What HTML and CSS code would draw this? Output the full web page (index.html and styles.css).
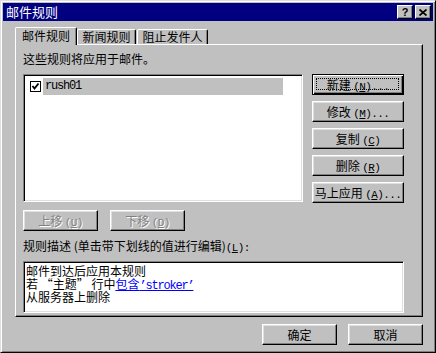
FILE: index.html
```html
<!DOCTYPE html>
<html lang="zh-CN">

<head>
    <meta charset="utf-8">
    <meta name="viewport" content="width=device-width, initial-scale=1.0">
    <link rel="stylesheet" href="styles.css">
</head>

<body>
    <div class="window">
        <!-- Title bar -->
        <div class="titlebar">
            <span class="title">邮件规则</span>
            <div class="tb-buttons">
                <span class="tb-btn help">?</span>
                <span class="tb-btn">
                    <svg width="8" height="7" viewBox="0 0 8 7">
                        <path d="M0.5 0.5 L7.5 6.5 M7.5 0.5 L0.5 6.5" stroke="#000" stroke-width="1.7" fill="none" />
                    </svg>
                </span>
            </div>
        </div>

        <div class="content">
            <!-- Tabs -->
            <div class="tabs">
                <div class="tab active">邮件规则</div>
                <div class="tab tab-news">新闻规则</div>
                <div class="tab tab-block">阻止发件人</div>
            </div>

            <div class="panel">
                <div class="label">这些规则将应用于邮件。</div>

                <div class="rules-row">
                    <div class="listbox">
                        <div class="item">
                            <svg class="check" width="11" height="11" viewBox="0 0 11 11">
                                <rect x="0.5" y="0.5" width="10" height="10" fill="#fff" stroke="#000" />
                                <polyline points="2.5,5 4.5,7.5 8.5,2.5" fill="none" stroke="#000" stroke-width="1.9" />
                            </svg>
                            <span class="item-name">rush01</span>
                        </div>
                    </div>

                    <div class="side-buttons">
                        <button class="btn default"><span class="focus"></span>新建 <span class="acc">(<u>N</u>)...</span></button>
                        <button class="btn">修改 <span class="acc">(<u>M</u>)...</span></button>
                        <button class="btn">复制 <span class="acc">(<u>C</u>)</span></button>
                        <button class="btn">删除 <span class="acc">(<u>R</u>)</span></button>
                        <button class="btn">马上应用 <span class="acc">(<u>A</u>)...</span></button>
                    </div>
                </div>

                <div class="move-row">
                    <button class="btn small" disabled>上移 <span class="acc">(<u>U</u>)</span></button>
                    <button class="btn small" disabled>下移 <span class="acc">(<u>D</u>)</span></button>
                </div>

                <div class="label label-desc">规则描述 (单击带下划线的值进行编辑)<span class="acc">(<u>L</u>):</span></div>

                <div class="desc">
                    <div class="desc-line">邮件到达后应用本规则</div>
                    <div class="desc-line">若 “主题” 行中<a class="link" href="#">包含<span class="mono">’stroker’</span></a></div>
                    <div class="desc-line">从服务器上删除</div>
                </div>
            </div>

            <div class="footer">
                <button class="btn small">确定</button>
                <button class="btn small">取消</button>
            </div>
        </div>
    </div>
</body>

</html>
```

FILE: styles.css
```css
* {
    box-sizing: border-box;
}

body {
    margin: 0;
    font-family: "Noto Sans CJK SC", "Liberation Sans", sans-serif;
    font-size: 12px;
    color: #000;
}

/* Outer dialog frame */
.window {
    width: 436px;
    height: 353px;
    background: #c0c0c0;
    border: 1px solid;
    border-color: #dfdfdf #000 #000 #dfdfdf;
    box-shadow: inset 1px 1px #fff, inset -1px -1px #808080;
    padding: 2px;
}

.titlebar {
    height: 18px;
    background: #000080;
    color: #fff;
    display: flex;
    align-items: center;
    justify-content: space-between;
    padding: 0 2px 0 3px;
}

.title {
    font-size: 13px;
    line-height: 18px;
}

.tb-buttons {
    display: flex;
    gap: 2px;
}

.tb-btn {
    width: 16px;
    height: 14px;
    background: #c0c0c0;
    border: 1px solid;
    border-color: #fff #000 #000 #fff;
    box-shadow: inset -1px -1px #808080;
    display: flex;
    align-items: center;
    justify-content: center;
    color: #000;
}

.tb-btn.help {
    font-family: "Liberation Sans", sans-serif;
    font-weight: bold;
    font-size: 11px;
    line-height: 12px;
}

.content {
    padding: 6px 10px 0 12px;
}

/* Tabs */
.tabs {
    display: flex;
    align-items: flex-start;
    height: 18px;
}

.tab {
    height: 15px;
    margin-top: 2px;
    background: #c0c0c0;
    border: 1px solid;
    border-bottom: none;
    border-color: #fff #000 #000 #fff;
    border-radius: 2px 2px 0 0;
    box-shadow: inset -1px 0 #808080;
    text-align: center;
    line-height: 14px;
}

.tab.active {
    position: relative;
    z-index: 1;
    height: 18px;
    margin-top: 0;
    width: 62px;
    line-height: 15px;
}

.tab-news {
    width: 59px;
}

.tab-block {
    width: 71px;
    margin-left: 1px;
}

/* Tab page */
.panel {
    margin-top: -1px;
    height: 273px;
    border: 1px solid;
    border-color: #fff #000 #000 #fff;
    box-shadow: inset -1px -1px #808080;
    padding: 7px 0 0 7px;
}

.label {
    height: 14px;
    line-height: 14px;
    margin-bottom: 8px;
}

.label-desc {
    margin-top: 8px;
}

.rules-row {
    display: flex;
}

.listbox,
.desc {
    background: #fff;
    border: 1px solid;
    border-color: #808080 #fff #fff #808080;
    box-shadow: inset 1px 1px #000, inset -1px -1px #dfdfdf;
}

.listbox {
    width: 280px;
    height: 128px;
    padding: 3px 0 0 6px;
}

.item {
    display: flex;
    align-items: center;
    gap: 2px;
}

.item-name {
    width: 240px;
    height: 17px;
    background: #c0c0c0;
    padding-left: 2px;
    font-family: "Liberation Mono", monospace;
    font-size: 12px;
    letter-spacing: -1.2px;
    line-height: 17px;
}

.side-buttons {
    margin-left: 9px;
    display: flex;
    flex-direction: column;
    gap: 6px;
}

/* Win95 style push buttons */
.btn {
    position: relative;
    width: 92px;
    height: 21px;
    padding: 0;
    background: #c0c0c0;
    border: 1px solid;
    border-color: #fff #000 #000 #fff;
    box-shadow: inset -1px -1px #808080, inset 1px 1px #dfdfdf;
    font-family: "Noto Sans CJK SC", sans-serif;
    font-size: 12px;
    line-height: 17px;
    color: #000;
    white-space: nowrap;
}

.btn.default {
    border-color: #000;
    box-shadow: inset 1px 1px #fff, inset -1px -1px #000, inset -2px -2px #808080;
}

.btn .focus {
    position: absolute;
    top: 3px;
    left: 3px;
    right: 4px;
    bottom: 4px;
    border: 1px dotted #000;
}

.btn.small {
    width: 75px;
}

.btn:disabled {
    color: #808080;
    text-shadow: 1px 1px #fff;
}

.acc {
    font-family: "Liberation Mono", monospace;
    font-size: 11px;
    letter-spacing: -0.6px;
    line-height: 0;
}

.move-row {
    display: flex;
    gap: 12px;
    margin-top: 7px;
}

.desc {
    width: 381px;
    height: 52px;
    padding: 2px 0 0 2px;
}

.desc-line {
    height: 13px;
    line-height: 13px;
    white-space: nowrap;
}

.link {
    color: #0000ff;
    text-decoration: underline;
}

.mono {
    font-family: "Liberation Mono", monospace;
    font-size: 12px;
    letter-spacing: -1.2px;
    line-height: 0;
}

.footer {
    display: flex;
    justify-content: flex-end;
    gap: 11px;
    margin-top: 7px;
}
```
